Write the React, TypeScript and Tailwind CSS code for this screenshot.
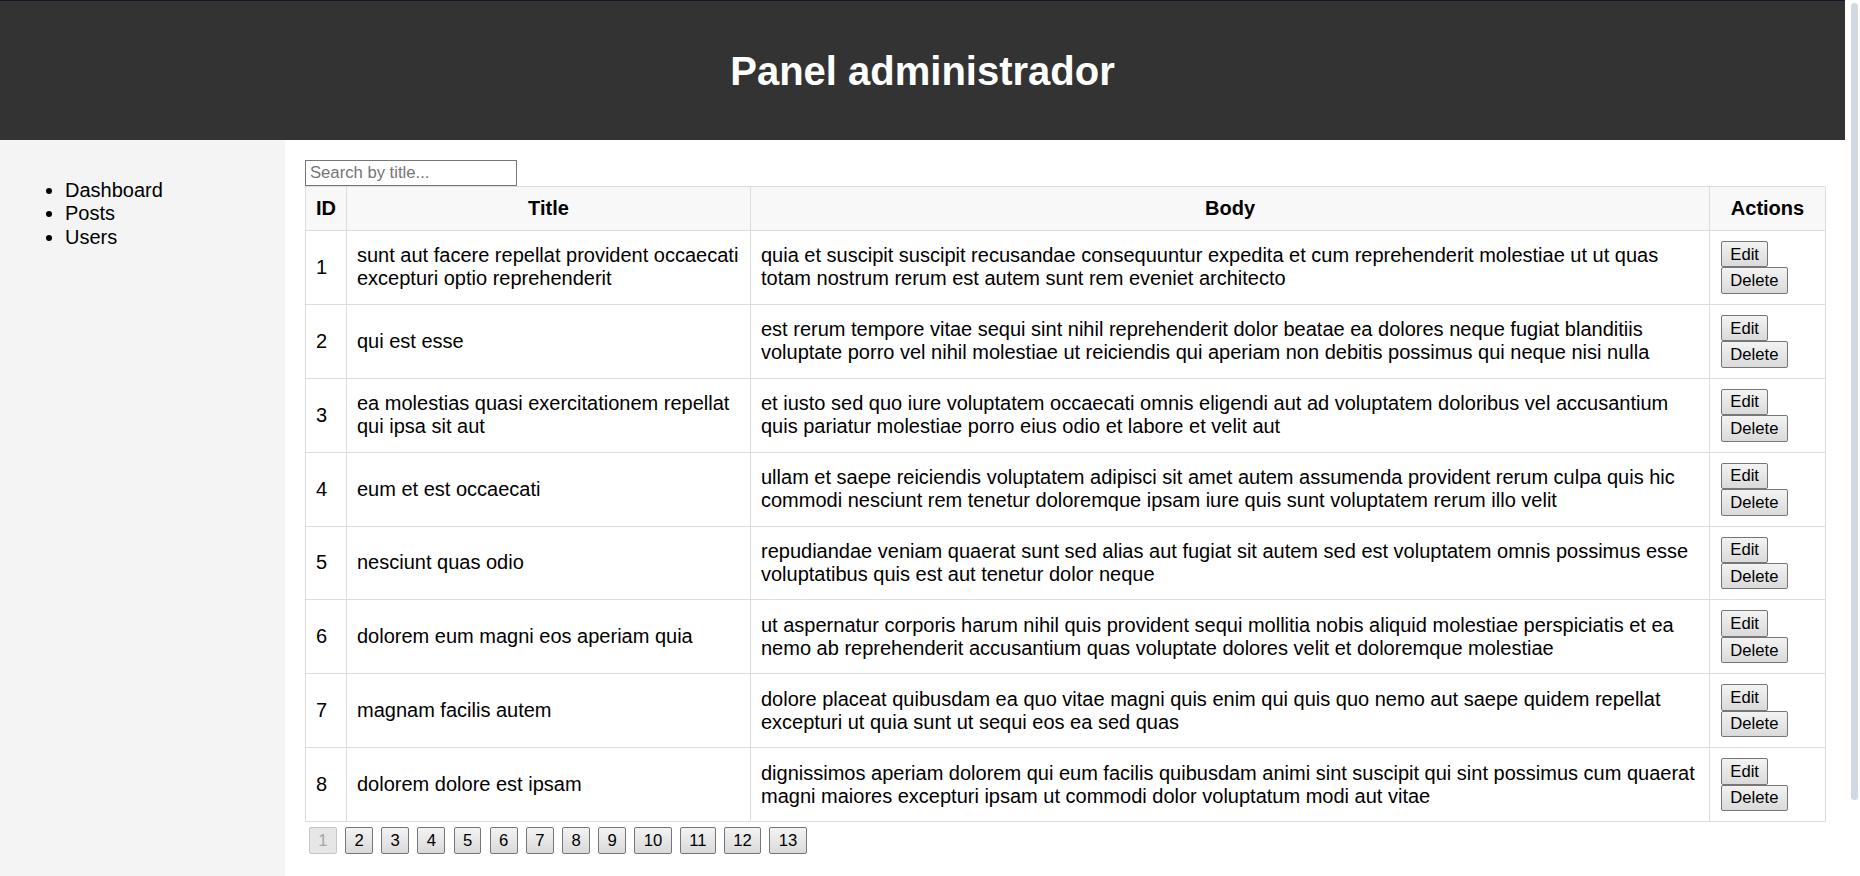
import React from "react"

const posts = [
  {
    id: 1,
    title: "sunt aut facere repellat provident occaecati excepturi optio reprehenderit",
    body: "quia et suscipit suscipit recusandae consequuntur expedita et cum reprehenderit molestiae ut ut quas totam nostrum rerum est autem sunt rem eveniet architecto",
  },
  {
    id: 2,
    title: "qui est esse",
    body: "est rerum tempore vitae sequi sint nihil reprehenderit dolor beatae ea dolores neque fugiat blanditiis voluptate porro vel nihil molestiae ut reiciendis qui aperiam non debitis possimus qui neque nisi nulla",
  },
  {
    id: 3,
    title: "ea molestias quasi exercitationem repellat qui ipsa sit aut",
    body: "et iusto sed quo iure voluptatem occaecati omnis eligendi aut ad voluptatem doloribus vel accusantium quis pariatur molestiae porro eius odio et labore et velit aut",
  },
  {
    id: 4,
    title: "eum et est occaecati",
    body: "ullam et saepe reiciendis voluptatem adipisci sit amet autem assumenda provident rerum culpa quis hic commodi nesciunt rem tenetur doloremque ipsam iure quis sunt voluptatem rerum illo velit",
  },
  {
    id: 5,
    title: "nesciunt quas odio",
    body: "repudiandae veniam quaerat sunt sed alias aut fugiat sit autem sed est voluptatem omnis possimus esse voluptatibus quis est aut tenetur dolor neque",
  },
  {
    id: 6,
    title: "dolorem eum magni eos aperiam quia",
    body: "ut aspernatur corporis harum nihil quis provident sequi mollitia nobis aliquid molestiae perspiciatis et ea nemo ab reprehenderit accusantium quas voluptate dolores velit et doloremque molestiae",
  },
  {
    id: 7,
    title: "magnam facilis autem",
    body: "dolore placeat quibusdam ea quo vitae magni quis enim qui quis quo nemo aut saepe quidem repellat excepturi ut quia sunt ut sequi eos ea sed quas",
  },
  {
    id: 8,
    title: "dolorem dolore est ipsam",
    body: "dignissimos aperiam dolorem qui eum facilis quibusdam animi sint suscipit qui sint possimus cum quaerat magni maiores excepturi ipsam ut commodi dolor voluptatum modi aut vitae",
  },
]

const pages = [1, 2, 3, 4, 5, 6, 7, 8, 9, 10, 11, 12, 13]

const btn =
  "h-[26.45px] px-[8.3px] text-[16.67px] leading-[19px] border border-[#767676] rounded-[2px] bg-gradient-to-b from-[#f3f3f3] to-[#dadada] text-black"

const App = () => {
  return (
    <div className="h-[876px] w-full flex overflow-hidden bg-white text-black font-['Liberation_Sans',Arial,sans-serif]">
      <div className="flex-1 min-w-0 flex flex-col">
        {/* Header */}
        <header className="h-[140px] shrink-0 bg-[#333333] border-t border-[#1b1226] flex items-center justify-center">
          <h1 className="text-white text-[40px] leading-[46px] font-bold">Panel administrador</h1>
        </header>

        <div className="flex flex-1 min-h-0">
          {/* Sidebar */}
          <aside className="w-[285px] shrink-0 bg-[#f4f4f4] pl-[25px] pt-[19px]">
            <ul className="list-disc pl-[40px] my-[20px] text-[20px] leading-[23.3px]">
              <li>Dashboard</li>
              <li>Posts</li>
              <li>Users</li>
            </ul>
          </aside>

          {/* Main */}
          <main className="flex-1 min-w-0 p-[20px]">
            <input
              type="text"
              placeholder="Search by title..."
              className="block w-[212px] h-[26px] border border-[#767676] px-[4px] text-[16.67px] placeholder:text-[#757575] outline-none"
            />
            <table className="w-full table-fixed border-collapse text-[20px] leading-[23px]">
              <thead>
                <tr className="bg-[#f8f8f8]">
                  <th className="w-[41px] border border-[#dddddd] py-[10px] px-[10px] font-bold text-center">ID</th>
                  <th className="w-[404px] border border-[#dddddd] py-[10px] px-[10px] font-bold text-center">Title</th>
                  <th className="w-[959px] border border-[#dddddd] py-[10px] px-[10px] font-bold text-center">Body</th>
                  <th className="w-[116px] border border-[#dddddd] py-[10px] px-[10px] font-bold text-center">Actions</th>
                </tr>
              </thead>
              <tbody>
                {posts.map((p) => (
                  <tr key={p.id}>
                    <td className="border border-[#dddddd] p-[10px] align-middle">{p.id}</td>
                    <td className="border border-[#dddddd] p-[10px] align-middle">{p.title}</td>
                    <td className="border border-[#dddddd] p-[10px] align-middle">{p.body}</td>
                    <td className="border border-[#dddddd] py-[10px] pl-[11px] pr-[10px] align-middle">
                      <div className="flex flex-col items-start">
                        <button className={btn}>Edit</button>
                        <button className={btn}>Delete</button>
                      </div>
                    </td>
                  </tr>
                ))}
              </tbody>
            </table>

            {/* Pagination */}
            <div className="flex gap-[8.3px] pl-[4px] mt-[5px]">
              {pages.map((n) =>
                n === 1 ? (
                  <button
                    key={n}
                    disabled
                    className="h-[26.7px] px-[8.3px] text-[16.67px] leading-[19px] border border-[#c6c6c6] rounded-[2px] bg-[#e6e6e6] text-[#a6a6a6]"
                  >
                    {n}
                  </button>
                ) : (
                  <button
                    key={n}
                    className="h-[26.7px] px-[8.3px] text-[16.67px] leading-[19px] border border-[#767676] rounded-[2px] bg-gradient-to-b from-[#f3f3f3] to-[#dadada] text-black"
                  >
                    {n}
                  </button>
                )
              )}
            </div>
          </main>
        </div>
      </div>

      {/* Scrollbar */}
      <div className="w-[15px] shrink-0 bg-white flex justify-end pr-[2px] pt-[3px]">
        <div className="w-[7px] h-[797px] rounded-full bg-[#d0d8e2]" />
      </div>
    </div>
  )
}

export default App
